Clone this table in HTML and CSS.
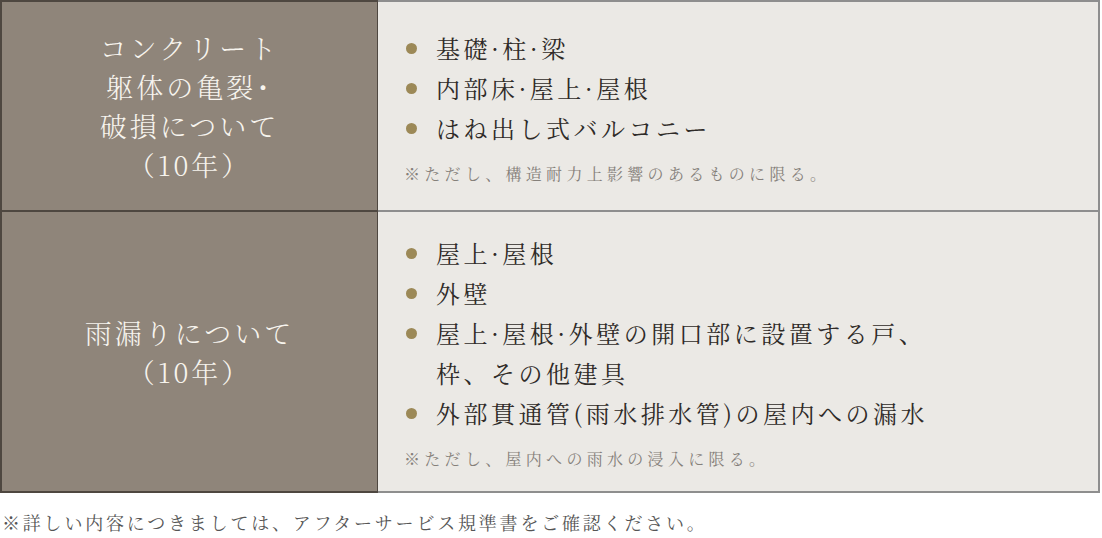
FILE: index.html
```html
<!DOCTYPE html>
<html lang="ja">
<head>
<meta charset="utf-8">
<link rel="stylesheet" href="styles.css">
</head>
<body>
<div class="warranty">
  <div class="row">
    <div class="head"><p>コンクリート<br>躯体の亀裂･<br>破損について<br>（10年）</p></div>
    <div class="body body-first">
      <ul class="items">
        <li>基礎·柱·梁</li>
        <li>内部床·屋上·屋根</li>
        <li>はね出し式バルコニー</li>
      </ul>
      <p class="note">※ただし、構造耐力上影響のあるものに限る。</p>
    </div>
  </div>
  <div class="row row-last">
    <div class="head"><p>雨漏りについて<br>（10年）</p></div>
    <div class="body body-second">
      <ul class="items">
        <li>屋上·屋根</li>
        <li>外壁</li>
        <li>屋上·屋根·外壁の開口部に設置する戸、<br>枠、その他建具</li>
        <li>外部貫通管(雨水排水管)の屋内への漏水</li>
      </ul>
      <p class="note">※ただし、屋内への雨水の浸入に限る。</p>
    </div>
  </div>
</div>
<p class="footnote">※詳しい内容につきましては、アフターサービス規準書をご確認ください。</p>
</body>
</html>
```

FILE: styles.css
```css
html, body {
  margin: 0;
  padding: 0;
  background: #ffffff;
}
body {
  font-family: "Noto Serif CJK JP", "Noto Sans CJK JP", serif;
  color: #333;
  width: 1102px;
}
.warranty {
  width: 1100px;
}
.row {
  display: grid;
  grid-template-columns: 378px 1fr;
}
.head {
  background: #8f857a;
  border-left: 2px solid #4e4740;
  border-top: 2px solid #4e4740;
  border-right: 1px solid #4e4740;
  display: flex;
  align-items: center;
  justify-content: center;
  text-align: center;
}
.head p {
  margin: 0;
  color: #f7f4ee;
  font-size: 27px;
  line-height: 39px;
  letter-spacing: 3px;
  font-weight: 300;
}
.body {
  background: #ebe9e5;
  border-top: 2px solid #8e8e8e;
  border-right: 2px solid #8e8e8e;
  padding: 26px 24px 22px 26px;
}
.body-second {
  padding-top: 21px;
  padding-bottom: 18px;
}
.row-last .head {
  border-bottom: 2px solid #4e4740;
}
.row-last .body {
  border-bottom: 2px solid #8e8e8e;
}
.items {
  list-style: none;
  margin: 0;
  padding: 0;
}
.items li {
  position: relative;
  padding-left: 32px;
  font-size: 24px;
  line-height: 40px;
  letter-spacing: 3.5px;
  color: #2f2b28;
}
.items li::before {
  content: "";
  position: absolute;
  left: 2px;
  top: 15px;
  width: 11px;
  height: 11px;
  border-radius: 50%;
  background: #9c8957;
}
.note {
  margin: 12px 0 0;
  font-size: 16px;
  line-height: 28px;
  letter-spacing: 4.3px;
  color: #85807a;
}
.footnote {
  margin: 15px 0 0 2px;
  font-size: 18px;
  line-height: 28px;
  letter-spacing: 2.8px;
  color: #555;
}
```
